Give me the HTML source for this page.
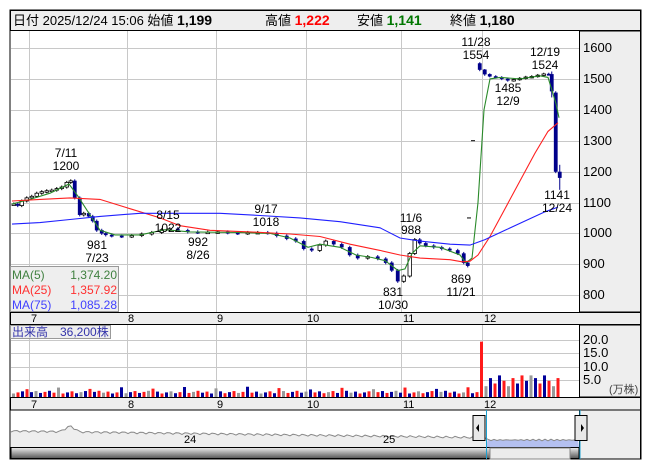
<!DOCTYPE html>
<html><head><meta charset="utf-8">
<style>
body{margin:0;background:#fff;width:653px;height:470px;overflow:hidden;font-family:"Liberation Sans","Noto Sans CJK JP",sans-serif;}
svg{position:absolute;left:0;top:0}
text{font-family:"Liberation Sans","Noto Sans CJK JP",sans-serif;}
</style></head><body>
<svg id="s" width="653" height="470" xmlns="http://www.w3.org/2000/svg">
<rect x="10" y="10" width="631" height="449" fill="#fff" stroke="#000"/>
<rect x="10.5" y="10.5" width="630" height="20" fill="#eeeeee" stroke="#000"/>
<text y="25" font-size="13"><tspan x="13" fill="#000">日付 2025/12/24 15:06 始値 </tspan><tspan font-weight="bold" font-size="14">1,199</tspan><tspan x="265" font-size="13">高値 </tspan><tspan font-weight="bold" font-size="14" fill="#f00">1,222</tspan><tspan x="357">安値 </tspan><tspan font-weight="bold" font-size="14" fill="#070">1,141</tspan><tspan x="450">終値 </tspan><tspan font-weight="bold" font-size="14">1,180</tspan></text>
<rect x="579.5" y="31" width="61" height="281" fill="#eeeeee" stroke="#000"/>
<rect x="579.5" y="325" width="61" height="72" fill="#eeeeee" stroke="#000"/>
<rect x="579.5" y="410" width="61" height="49" fill="#eeeeee" stroke="#000"/>
<g id="grid" stroke="#c8c8c8" stroke-width="1"></g>
<line x1="10" y1="312.5" x2="641" y2="312.5" stroke="#000"/>
<rect x="10.5" y="312.5" width="630" height="12" fill="#eeeeee" stroke="#000"/>
<rect x="10.5" y="397.5" width="630" height="12.5" fill="#eeeeee" stroke="#000"/>
<g font-size="11" fill="#000">
<text x="31" y="322">7</text><text x="128" y="322">8</text><text x="217" y="322">9</text><text x="307" y="322">10</text><text x="403" y="322">11</text><text x="484" y="322">12</text>
<text x="31" y="408">7</text><text x="128" y="408">8</text><text x="217" y="408">9</text><text x="307" y="408">10</text><text x="403" y="408">11</text><text x="484" y="408">12</text>
</g>
<g font-size="13" fill="#000">
<text x="583" y="52">1600</text><text x="583" y="83">1500</text><text x="583" y="114">1400</text><text x="583" y="145">1300</text><text x="583" y="176">1200</text><text x="583" y="207">1100</text><text x="583" y="237">1000</text><text x="583" y="268">900</text><text x="583" y="299">800</text>
<text x="583" y="344">20.0</text><text x="583" y="357">15.0</text><text x="583" y="371">10.0</text><text x="583" y="384">5.0</text>
<text x="609" y="393" font-size="11" fill="#444">(万株)</text>
</g>
<g id="chart"></g>
<g font-size="12" fill="#000" text-anchor="middle">
<text x="66" y="157">7/11</text><text x="66" y="170">1200</text>
<text x="97" y="249">981</text><text x="97" y="262">7/23</text>
<text x="168" y="219">8/15</text><text x="168" y="232">1022</text>
<text x="198" y="246">992</text><text x="198" y="259">8/26</text>
<text x="266" y="213">9/17</text><text x="266" y="226">1018</text>
<text x="411" y="222">11/6</text><text x="411" y="234">988</text>
<text x="393" y="296">831</text><text x="393" y="309">10/30</text>
<text x="461" y="283">869</text><text x="461" y="296">11/21</text>
<text x="476" y="46">11/28</text><text x="476" y="59">1554</text>
<text x="545" y="56">12/19</text><text x="545" y="69">1524</text>
<text x="508" y="92">1485</text><text x="508" y="105">12/9</text>
<text x="557" y="199">1141</text><text x="557" y="212">12/24</text>
</g>
<rect x="10.5" y="266.5" width="108" height="45" fill="#eeeeee" stroke="#999"/>
<g font-size="12"><text x="12" y="279" fill="#408040">MA(5)</text><text x="117" y="279" fill="#408040" text-anchor="end">1,374.20</text>
<text x="12" y="294" fill="#ff3030">MA(25)</text><text x="117" y="294" fill="#ff3030" text-anchor="end">1,357.92</text>
<text x="12" y="309" fill="#4040ff">MA(75)</text><text x="117" y="309" fill="#4040ff" text-anchor="end">1,085.28</text></g>
<rect x="10.5" y="325.5" width="100" height="13" fill="#eeeeee" stroke="#999"/>
<text x="12" y="336" font-size="12" fill="#3333aa">出来高　36,200株</text>
<g id="nav"></g>
<text x="184" y="443" font-size="11">24</text><text x="383" y="443" font-size="11">25</text>
</svg>
<script>
var NS="http://www.w3.org/2000/svg";
function el(p,t,a){var e=document.createElementNS(NS,t);for(var k in a)e.setAttribute(k,a[k]);p.appendChild(e);return e;}
var g=document.getElementById('grid'),c=document.getElementById('chart'),n=document.getElementById('nav');
function Y(p){return 48+(1600-p)*0.309;}
[1600,1500,1400,1300,1200,1100,1000,900,800].forEach(function(p){var y=Math.round(Y(p))+.5;el(g,'line',{x1:11,x2:579,y1:y,y2:y});});
[340,353,367,380].forEach(function(y){el(g,'line',{x1:11,x2:579,y1:y+.5,y2:y+.5});});
[29,127,216,306,401,482].forEach(function(x){el(g,'line',{x1:x+.5,x2:x+.5,y1:31,y2:312});el(g,'line',{x1:x+.5,x2:x+.5,y1:325,y2:397});});
// candles: [x, open, close, high, low]
var C=[];
var pts=[[12,1095],[16,1090],[20,1105],[25,1115],[30,1120],[35,1130],[40,1135],[45,1138],[50,1140],[55,1145],[60,1150],[65,1165],[69,1170],[73,1115],[78,1060],[82,1065],[87,1055],[91,1040],[95,1010],[100,1000],[104,995],[110,992],[120,990],[130,993],[140,998],[150,1003],[160,1012],[168,1015],[176,1010],[186,1005],[196,1003],[206,1004],[216,1005],[226,1002],[236,1000],[246,1003],[256,1003],[266,1001],[275,992],[285,983],[294,975],[302,950],[310,945],[318,962],[324,975],[332,965],[340,955],[348,930],[356,920],[366,925],[376,918],[384,905],[390,880],[396,845],[402,862],[408,935],[413,980],[418,968],[424,960],[432,955],[440,950],[448,945],[456,935],[462,905],[466,895]];
var prev=pts[0][1];
pts.forEach(function(q){C.push([q[0],prev,q[1],Math.max(prev,q[1])+5,Math.min(prev,q[1])-5]);prev=q[1];});
C.push([478,1550,1530,1554,1525]);C.push([483,1530,1515,1532,1510]);C.push([488,1515,1508,1518,1505]);
var pr=1508;[[494,1505],[500,1500],[506,1495],[512,1498],[518,1502],[524,1506],[530,1508],[536,1512],[542,1516],[547,1515]].forEach(function(q){C.push([q[0],pr,q[1],Math.max(pr,q[1])+4,Math.min(pr,q[1])-4]);pr=q[1];});
C.push([550,1515,1460,1524,1440]);C.push([554,1455,1200,1460,1195]);C.push([558,1199,1180,1222,1141]);
C.forEach(function(k){var x=k[0],o=k[1],cl=k[2];var up=cl>=o;var y1=Y(Math.max(o,cl)),y2=Y(Math.min(o,cl));var h=Math.max(y2-y1,1.5);
var col=up?'#000':'#00008b';
el(c,'line',{x1:x+1.75,x2:x+1.75,y1:Y(k[3]),y2:Y(k[4]),stroke:col,'stroke-width':1});
el(c,'rect',{x:x,y:y1,width:3.5,height:h,fill:up?'#fff':'#00008b',stroke:col,'stroke-width':up?0.8:0.3});});
function line(a,col){el(c,'polyline',{points:a.map(function(q){return q[0]+','+Y(q[1]).toFixed(1)}).join(' '),fill:'none',stroke:col,'stroke-width':1.1});}
line([[12,1095],[30,1110],[50,1130],[69,1160],[78,1120],[90,1060],[100,1010],[115,995],[140,995],[165,1012],[190,1005],[240,1003],[270,1000],[290,985],[308,955],[320,965],[340,955],[356,930],[372,922],[385,912],[398,880],[405,885],[412,935],[420,960],[440,955],[460,930],[466,905],[472,920],[478,1100],[484,1400],[490,1500],[500,1505],[520,1500],[540,1510],[548,1505],[556,1420],[559,1374]],'#2a8a2a');
line([[12,1105],[40,1110],[70,1115],[100,1110],[130,1080],[160,1050],[180,1025],[210,1010],[250,1005],[290,998],[320,990],[350,965],[380,945],[400,930],[420,920],[450,915],[462,908],[470,910],[478,930],[490,990],[505,1080],[520,1170],[535,1260],[548,1330],[558,1358]],'#ff2020');
line([[12,1030],[40,1035],[70,1045],[100,1055],[140,1065],[180,1065],[220,1065],[260,1058],[300,1050],[340,1038],[380,1018],[400,985],[420,975],[450,965],[470,962],[485,980],[505,1010],[525,1040],[545,1070],[558,1085]],'#2020ff');
el(c,'line',{x1:471,x2:475,y1:Y(1300),y2:Y(1300),stroke:'#000'});
el(c,'line',{x1:467,x2:471,y1:Y(1050),y2:Y(1050),stroke:'#000'});
// volume
for(var i=0;i<122;i++){var x=12+i*4.5;var v=1.3+((i*37)%11)/10;if(i%7==3)v+=1.5;var col=(i*7%5==0)?'#999':((i*3%2)?'#ff1a1a':'#00009a');
if(i==104){v=20.5;col='#ff1a1a';}else if(i>104){v=4+((i*13)%5);if(i==108||i==115)v=8;}
el(c,'rect',{x:x,y:397-v*2.7,width:3,height:v*2.7,fill:col});}
// navigator
el(n,'rect',{x:11,y:410.5,width:568,height:37,fill:'#fff'});
var np=[];for(var x=11;x<=579;x+=3){var yy=431+(x-11)*0.014+Math.sin(x*0.7)*1.0;if(x>60&&x<80)yy-=(10-Math.abs(x-70))*0.6;if(x>486)yy=440+Math.sin(x)*0.8;np.push([x,yy]);}
el(n,'polygon',{points:'11,447 '+np.map(function(q){return q[0]+','+q[1].toFixed(1)}).join(' ')+' 579,447',fill:'#eeeeee'});
el(n,'polygon',{points:'486,447 '+np.filter(function(q){return q[0]>=486}).map(function(q){return q[0]+','+q[1].toFixed(1)}).join(' ')+' 579,447',fill:'#b4c0f0'});
el(n,'polyline',{points:np.map(function(q){return q[0]+','+q[1].toFixed(1)}).join(' '),fill:'none',stroke:'#888'});
var gr=el(n,'linearGradient',{id:'gd',x1:0,y1:0,x2:0,y2:1});el(gr,'stop',{offset:0,'stop-color':'#eee'});el(gr,'stop',{offset:1,'stop-color':'#555'});
el(n,'rect',{x:11,y:447.5,width:568,height:11,fill:'url(#gd)',stroke:'#000'});
el(n,'rect',{x:490,y:448,width:80,height:11,fill:'#ececec',stroke:'#888'});
el(n,'line',{x1:486.5,x2:486.5,y1:410,y2:459,stroke:'#1aa0d0'});
el(n,'line',{x1:580,x2:580,y1:410,y2:459,stroke:'#1aa0d0'});
[[473,'M479,424 L476,428 L479,432Z'],[575,'M581,424 L584,428 L581,432Z']].forEach(function(h){el(n,'rect',{x:h[0],y:415.5,width:12,height:25,fill:'#e8e8e8',stroke:'#000'});el(n,'path',{d:h[1],fill:'#000'});});
</script>
</body></html>
